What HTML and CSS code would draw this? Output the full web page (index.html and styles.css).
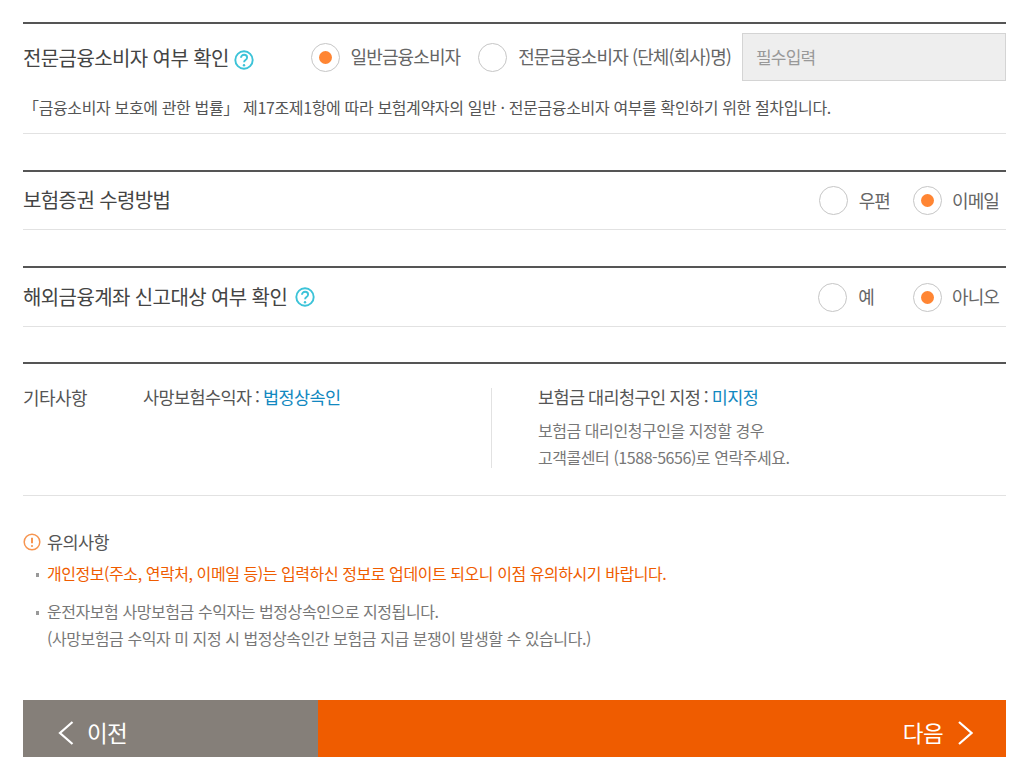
FILE: index.html
```html
<!DOCTYPE html>
<html lang="ko">
<head>
<meta charset="utf-8">
<title>보험증권 수령방법</title>
<link rel="stylesheet" href="styles.css">
</head>
<body>
<main class="page">
  <section class="block block-first">
    <div class="row row-tall">
      <div class="title">전문금융소비자 여부 확인
        <svg class="help help-a" viewBox="0 0 20 20"><circle cx="10" cy="10" r="8.7"/><path d="M7 7.8c0-1.8 1.3-3 3.1-3s3 1.1 3 2.7c0 1.2-.7 1.9-1.6 2.5-.9.6-1.4 1.1-1.4 2.2"/><circle class="dot" cx="10" cy="15.2" r="1.2"/></svg>
      </div>
      <div class="opts">
        <span class="radio on"></span><span class="opt-label">일반금융소비자</span>
        <span class="radio"></span><span class="opt-label">전문금융소비자 (단체(회사)명)</span>
        <div class="input">필수입력</div>
      </div>
    </div>
    <p class="desc">「금융소비자 보호에 관한 법률」 제17조제1항에 따라 보험계약자의 일반 · 전문금융소비자 여부를 확인하기 위한 절차입니다.</p>
  </section>

  <section class="block block-simple">
    <div class="title">보험증권 수령방법</div>
    <div class="choices">
      <span class="radio"></span><span class="opt-label">우편</span>
      <span class="radio on"></span><span class="opt-label">이메일</span>
    </div>
  </section>

  <section class="block block-simple block-before-etc">
    <div class="title">해외금융계좌 신고대상 여부 확인
      <svg class="help help-b" viewBox="0 0 20 20"><circle cx="10" cy="10" r="8.7"/><path d="M7 7.8c0-1.8 1.3-3 3.1-3s3 1.1 3 2.7c0 1.2-.7 1.9-1.6 2.5-.9.6-1.4 1.1-1.4 2.2"/><circle class="dot" cx="10" cy="15.2" r="1.2"/></svg>
    </div>
    <div class="choices">
      <span class="radio"></span><span class="opt-label label-short">예</span>
      <span class="radio on"></span><span class="opt-label">아니오</span>
    </div>
  </section>

  <section class="block block-etc">
    <div class="etc-title">기타사항</div>
    <div class="etc-left">사망보험수익자 : <span class="link">법정상속인</span></div>
    <div class="etc-right">
      <div class="etc-head">보험금 대리청구인 지정 : <span class="link">미지정</span></div>
      <p class="etc-note">보험금 대리인청구인을 지정할 경우<br>고객콜센터 (1588-5656)로 연락주세요.</p>
    </div>
  </section>

  <section class="notice">
    <h2 class="notice-title">
      <svg class="warn" viewBox="0 0 18 18"><circle cx="9" cy="9" r="7.8"/><path d="M9 4.8v5.4"/><circle class="warn-dot" cx="9" cy="13" r="1.1"/></svg>
      유의사항
    </h2>
    <ul class="notice-list">
      <li class="strong">개인정보(주소, 연락처, 이메일 등)는 입력하신 정보로 업데이트 되오니 이점 유의하시기 바랍니다.</li>
      <li>운전자보험 사망보험금 수익자는 법정상속인으로 지정됩니다.<br>(사망보험금 수익자 미 지정 시 법정상속인간 보험금 지급 분쟁이 발생할 수 있습니다.)</li>
    </ul>
  </section>

  <nav class="buttons">
    <a class="btn btn-prev"><svg class="chev" viewBox="0 0 16 26"><path d="M14.5 2 2 13l12.5 11"/></svg>이전</a>
    <a class="btn btn-next">다음<svg class="chev" viewBox="0 0 16 26"><path d="M2 2l12.5 11L2 24"/></svg></a>
  </nav>
</main>
</body>
</html>
```
FILE: styles.css
```css
* { box-sizing: border-box; }
html, body { margin: 0; padding: 0; background: #fff; }
body {
  width: 1024px;
  height: 757px;
  overflow: hidden;
  font-family: "Noto Sans CJK KR", "Noto Sans", sans-serif;
  color: #555;
}
.page { padding: 22px 18px 0 23px; }

.block {
  border-top: 2px solid #555;
  border-bottom: 1px solid #e2e2e2;
  margin-bottom: 36px;
}
.block-before-etc { margin-bottom: 35px; }
.block-first { height: 112px; }
.row-tall {
  display: flex;
  align-items: center;
  justify-content: space-between;
  height: 66px;
}
.title {
  font-size: 20px;
  line-height: 26px;
  letter-spacing: -0.6px;
  color: #444;
  display: flex;
  align-items: center;
  margin-top: 1px;
}
.block-simple .title { margin-top: -1px; }
.help { width: 20px; height: 20px; fill: none; stroke: #3cc3d8; stroke-width: 1.9; flex: none; }
.help .dot { fill: #3cc3d8; stroke: none; }
.help-a { margin-left: 5px; margin-top: 4px; }
.help-b { margin-left: 8px; margin-top: 1px; }

.opts { display: flex; align-items: center; }
.radio {
  width: 29px;
  height: 29px;
  border: 1px solid #c6c6c6;
  border-radius: 50%;
  background: #fff;
  display: flex;
  align-items: center;
  justify-content: center;
  flex: none;
}
.radio.on::after {
  content: "";
  width: 13px;
  height: 13px;
  border-radius: 50%;
  background: #ff8533;
}
.opt-label {
  font-size: 18px;
  line-height: 24px;
  letter-spacing: -0.9px;
  color: #666;
  margin-left: 11px;
  margin-right: 18px;
  position: relative;
  top: -1px;
}
.opts .opt-label:nth-of-type(4) { margin-right: 11px; }
.input {
  width: 264px;
  height: 48px;
  border: 1px solid #d4d4d4;
  background: #eee;
  color: #999;
  font-size: 17px;
  line-height: 46px;
  padding-left: 13px;
  letter-spacing: -0.8px;
}
.desc {
  margin: 0;
  font-size: 16px;
  line-height: 24px;
  letter-spacing: -0.36px;
  color: #555;
  padding-top: 5px;
}

.block-simple {
  display: flex;
  align-items: center;
  justify-content: space-between;
  height: 61px;
}
.block-simple:nth-of-type(2) { height: 60px; }
.choices { display: flex; align-items: center; }
.choices .opt-label { margin-left: 11px; margin-right: 23px; }
.choices .label-short { margin-right: 39px; }
.choices .opt-label:last-child { margin-left: 10px; margin-right: 7px; }

.block-etc {
  display: grid;
  grid-template-columns: 120px 348px 1fr;
  height: 134px;
  padding-top: 20px;
  margin-bottom: 0;
  font-size: 17.5px;
  line-height: 26px;
  letter-spacing: -0.6px;
  color: #555;
}
.etc-title { font-size: 18px; }
.etc-left { word-spacing: -0.7px; }
.etc-right {
  border-left: 1px solid #e2e2e2;
  padding-left: 46px;
  height: 80px;
  margin-top: 4px;
}
.etc-head { margin-top: -4px; word-spacing: -0.7px; }
.link { color: #1288c0; }
.etc-note {
  margin: 7px 0 0;
  font-size: 16px;
  line-height: 27px;
  letter-spacing: -0.45px;
  color: #777;
}

.notice { padding-top: 33px; height: 204px; }
.notice-title {
  margin: 0;
  display: flex;
  align-items: center;
  gap: 6px;
  font-size: 17.5px;
  font-weight: 400;
  line-height: 26px;
  letter-spacing: -0.6px;
  color: #555;
}
.warn { width: 18px; height: 18px; fill: none; stroke: #f79550; stroke-width: 1.5; }
.warn path { stroke-width: 2; }
.warn-dot { fill: #f79550; stroke: none; }
.notice-list {
  list-style: none;
  margin: 5px 0 0;
  padding: 0 0 0 24px;
  font-size: 16px;
  line-height: 27px;
  letter-spacing: -0.44px;
  color: #777;
}
.notice-list li { position: relative; margin-bottom: 11px; }
.notice-list li::before {
  content: "";
  position: absolute;
  left: -11px;
  top: 13px;
  width: 3px;
  height: 4px;
  background: #999;
}
.notice-list .strong { color: #ef5c00; }

.buttons { display: flex; height: 57px; }
.btn {
  display: flex;
  align-items: center;
  padding-top: 7px;
  color: #fff;
  font-size: 22.5px;
  letter-spacing: -0.6px;
}
.btn-prev { width: 295px; background: #857f79; padding-left: 35px; gap: 13px; }
.btn-next { flex: 1; background: #ef5c00; justify-content: flex-end; padding-right: 33px; gap: 14px; }
.chev { width: 16px; height: 26px; fill: none; stroke: #fff; stroke-width: 2.2; margin-top: 2px; }
```
